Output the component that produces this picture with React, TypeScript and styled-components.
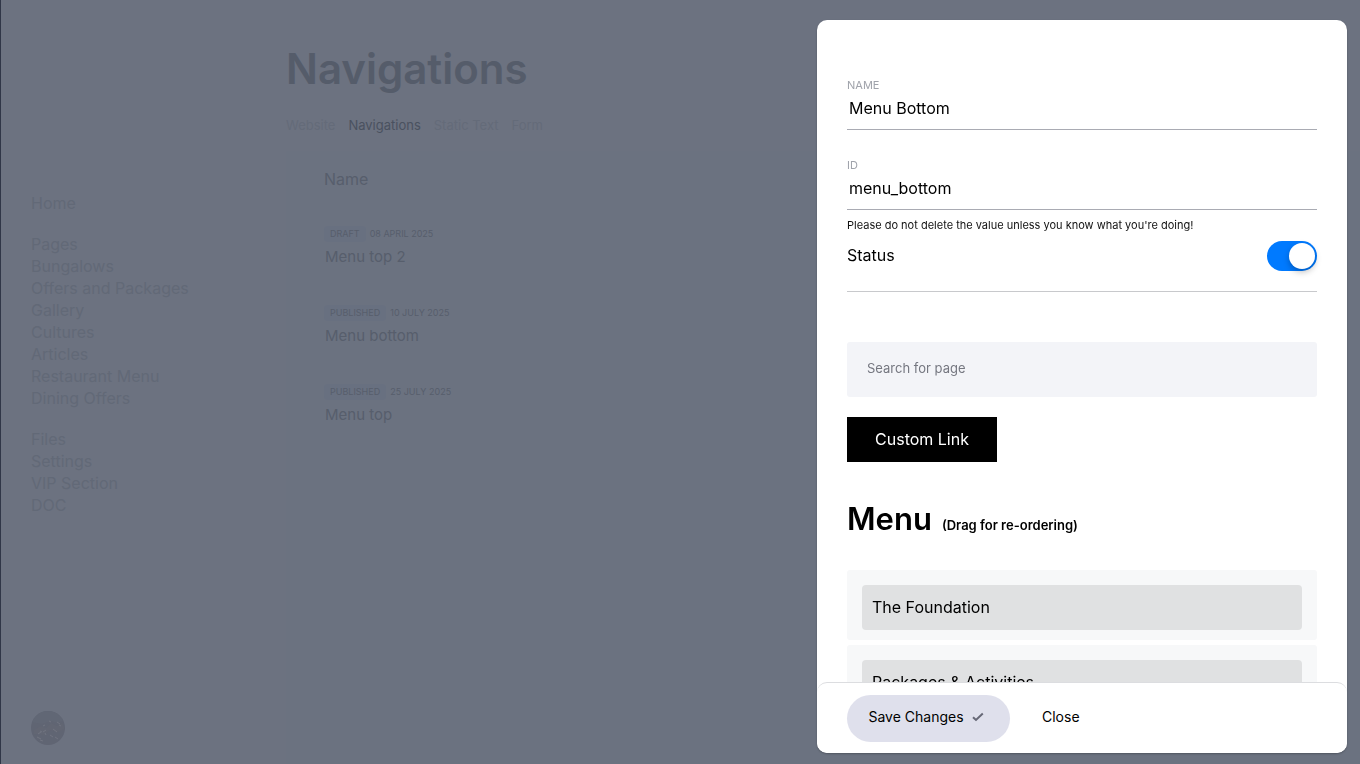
import React, { useState } from "react";
import styled, { createGlobalStyle } from "styled-components";

const GlobalStyle = createGlobalStyle`
  *, *::before, *::after { box-sizing: border-box; }
  body {
    margin: 0;
    background: #6c7280;
    color: #000;
    font-family: Inter, "Liberation Sans", sans-serif;
    font-size: 16px;
  }
  button, input { font: inherit; color: inherit; }
  h1, h2, p, ul { margin: 0; padding: 0; }
  ul { list-style: none; }
`;

const Page = styled.div`
  display: flex;
  min-height: 100vh;
  border-left: 1px solid #303647;
`;

const Sidebar = styled.aside`
  display: flex;
  flex-direction: column;
  flex: 0 0 285px;
  padding: 192px 30px 19px;
`;

const SideNav = styled.nav`
  display: flex;
  flex-direction: column;
  gap: 19px;
  flex: 1;
`;

const SideLink = styled.a`
  display: block;
  line-height: 22px;
  color: #626977;
  text-decoration: none;
`;

const Avatar = styled.svg`
  display: block;
  width: 34px;
  height: 34px;
  border-radius: 50%;
`;

const Main = styled.main`
  display: flex;
  flex-direction: column;
  flex: 1;
  min-width: 0;
  padding-top: 43px;
`;

const Title = styled.h1`
  font-size: 42px;
  line-height: 52px;
  font-weight: 600;
  color: #555c6a;
`;

const Tabs = styled.nav`
  display: flex;
  gap: 13px;
  margin-top: 22px;
  font-size: 13px;
  line-height: 16px;
`;

const Tab = styled.a<{ $active?: boolean }>`
  color: ${(p) => (p.$active ? "#4a515f" : "#646b79")};
  text-decoration: none;
`;

const Card = styled.section`
  flex: 1;
  margin-top: 18px;
  padding: 16px 38px;
  background: #6b7280;
`;

const Table = styled.table`
  width: 100%;
  border-collapse: collapse;
  text-align: left;
  color: #575e6c;

  th {
    padding: 0 0 35px;
    font-weight: 400;
    line-height: 24px;
  }
  td {
    height: 79px;
    padding: 0;
    vertical-align: top;
  }
`;

const Meta = styled.div`
  display: flex;
  align-items: center;
  gap: 4px;
  font-size: 9px;
  line-height: 16px;
  text-transform: uppercase;
`;

const Badge = styled.span`
  padding: 0 6px;
  border-radius: 4px;
  background: #687080;
`;

const RowTitle = styled.a`
  display: block;
  margin-top: 5px;
  padding-left: 1px;
  font-size: 15px;
  line-height: 20px;
  color: inherit;
  text-decoration: none;
`;

const Overlay = styled.div`
  position: fixed;
  inset: 0;
  display: flex;
  justify-content: flex-end;
  padding: 20px 13px 11px;
`;

const Drawer = styled.form`
  display: flex;
  flex-direction: column;
  width: 530px;
  max-width: 100%;
  border-radius: 10px;
  background: #fff;
  overflow: hidden;
  box-shadow: 0 1px 2px rgba(0, 0, 0, 0.25);
`;

const DrawerBody = styled.div`
  flex: 1;
  min-height: 0;
  margin-bottom: -10px;
  padding: 58px 30px 30px;
  overflow-y: auto;
  scrollbar-width: none;
`;

const Field = styled.div`
  display: flex;
  flex-direction: column;

  & + & { margin-top: 28px; }
`;

const FieldLabel = styled.label`
  font-size: 11px;
  line-height: 14px;
  color: #a0a3ab;
  text-transform: uppercase;
`;

const TextInput = styled.input`
  height: 38px;
  padding: 0 2px 6px;
  border: 0;
  border-bottom: 1px solid #a9abb3;
  background: transparent;
  outline: none;
`;

const Help = styled.p`
  margin-top: 7px;
  font-size: 11px;
  line-height: 16px;
  color: #111;
`;

const StatusRow = styled.label`
  display: flex;
  align-items: center;
  justify-content: space-between;
  padding: 8px 0 20px;
  border-bottom: 1px solid #c8c9cc;
  line-height: 20px;

  span { padding-bottom: 2px; }
`;

const Switch = styled.input`
  appearance: none;
  display: flex;
  align-items: center;
  width: 50px;
  height: 30px;
  margin: 0;
  padding: 2px;
  border-radius: 15px;
  background: #ccc;

  &::before {
    content: "";
    width: 26px;
    height: 26px;
    border-radius: 50%;
    background: #fff;
    box-shadow: 0 3px 6px rgba(0, 0, 0, 0.25);
  }
  &:checked {
    justify-content: flex-end;
    background: #007aff;
  }
`;

const Search = styled.input`
  display: block;
  width: 100%;
  height: 55px;
  margin-top: 50px;
  padding: 0 20px 3px;
  border: 0;
  border-radius: 3px;
  background: #f3f4f8;
  font-size: 13px;
  outline: none;

  &::placeholder { color: #757780; opacity: 1; }
`;

const CustomLink = styled.button`
  display: block;
  width: 150px;
  height: 45px;
  margin-top: 20px;
  padding: 0 0 2px;
  border: 0;
  background: #000;
  color: #fff;
`;

const MenuHeading = styled.h2`
  display: flex;
  align-items: baseline;
  gap: 10px;
  margin: 37px 0 31px;
  font-size: 31px;
  line-height: 40px;
  font-weight: 600;

  small {
    font-size: 13px;
    line-height: 20px;
  }
`;

const MenuList = styled.ul`
  display: flex;
  flex-direction: column;
  gap: 5px;
`;

const MenuItem = styled.li`
  padding: 15px 15px 10px;
  border-radius: 3px;
  background: #f7f8f9;
`;

const MenuHandle = styled.div`
  padding: 0 10px;
  border-radius: 4px;
  background: #e0e1e2;
  line-height: 45px;
  cursor: grab;
`;

const DrawerFooter = styled.footer`
  position: relative;
  display: flex;
  align-items: center;
  gap: 32px;
  padding: 12px 30px 11px;
  border-top: 1px solid #dcdde0;
  border-radius: 10px;
  background: #fff;
  font-size: 14px;
`;

const SaveButton = styled.button`
  display: flex;
  align-items: center;
  justify-content: center;
  gap: 8px;
  width: 163px;
  height: 47px;
  padding: 0 5px 4px 0;
  border: 0;
  border-radius: 24px;
  background: #dfe0ec;
`;

const CloseButton = styled.button`
  padding: 0 0 4px;
  border: 0;
  background: transparent;
`;

const sideGroups = [
  ["Home"],
  ["Pages", "Bungalows", "Offers and Packages", "Gallery", "Cultures", "Articles", "Restaurant Menu", "Dining Offers"],
  ["Files", "Settings", "VIP Section", "DOC"],
];

const tabs = ["Website", "Navigations", "Static Text", "Form"];

const navigations = [
  { status: "Draft", date: "08 April 2025", title: "Menu top 2" },
  { status: "Published", date: "10 July 2025", title: "Menu bottom" },
  { status: "Published", date: "25 July 2025", title: "Menu top" },
];

const menuItems = ["The Foundation", "Packages & Activities"];

export default function App() {
  const [name, setName] = useState("Menu Bottom");
  const [id, setId] = useState("menu_bottom");
  const [active, setActive] = useState(true);

  return (
    <>
      <GlobalStyle />
      <Page>
        <Sidebar>
          <SideNav aria-label="Sections">
            {sideGroups.map((group) => (
              <ul key={group[0]}>
                {group.map((item) => (
                  <li key={item}>
                    <SideLink href="#">{item}</SideLink>
                  </li>
                ))}
              </ul>
            ))}
          </SideNav>
          <Avatar viewBox="0 0 34 34" aria-hidden="true">
            <rect width="34" height="34" fill="#606573" />
            <path d="M0 0h34v9l-8 3-6-2-9 3-11-2z" fill="#616775" />
            <path d="M3 19l7-4 5 2 5-5 6 3 5-3 3 6-8 3-7-2-6 5-10-1z" fill="#626673" />
            <path
              d="M18 10l2 1M26 11l3 2M28 14l2 1M12 15l2-1M9 20l2 1M7 23l3-2M12 21l3-2M14 22l1 2M22 18l4 3M6 26l4 2M9 29l3 1M19 24l3 2M24 26l3 2"
              stroke="#707480"
              strokeWidth="1"
            />
          </Avatar>
        </Sidebar>

        <Main>
          <Title>Navigations</Title>
          <Tabs aria-label="Settings">
            {tabs.map((tab) => (
              <Tab key={tab} href="#" $active={tab === "Navigations"}>
                {tab}
              </Tab>
            ))}
          </Tabs>
          <Card>
            <Table>
              <thead>
                <tr>
                  <th scope="col">Name</th>
                </tr>
              </thead>
              <tbody>
                {navigations.map((row) => (
                  <tr key={row.title}>
                    <td>
                      <Meta>
                        <Badge>{row.status}</Badge>
                        <span>{row.date}</span>
                      </Meta>
                      <RowTitle href="#">{row.title}</RowTitle>
                    </td>
                  </tr>
                ))}
              </tbody>
            </Table>
          </Card>
        </Main>
      </Page>

      <Overlay>
        <Drawer onSubmit={(e) => e.preventDefault()}>
          <DrawerBody>
            <Field>
              <FieldLabel htmlFor="name">Name</FieldLabel>
              <TextInput id="name" value={name} onChange={(e) => setName(e.target.value)} />
            </Field>
            <Field>
              <FieldLabel htmlFor="identifier">ID</FieldLabel>
              <TextInput id="identifier" value={id} onChange={(e) => setId(e.target.value)} />
              <Help>Please do not delete the value unless you know what you're doing!</Help>
            </Field>
            <StatusRow>
              <span>Status</span>
              <Switch type="checkbox" role="switch" checked={active} onChange={(e) => setActive(e.target.checked)} />
            </StatusRow>
            <Search type="text" placeholder="Search for page" aria-label="Search for page" />
            <CustomLink type="button">Custom Link</CustomLink>
            <MenuHeading>
              Menu <small>(Drag for re-ordering)</small>
            </MenuHeading>
            <MenuList>
              {menuItems.map((item) => (
                <MenuItem key={item}>
                  <MenuHandle>{item}</MenuHandle>
                </MenuItem>
              ))}
            </MenuList>
          </DrawerBody>
          <DrawerFooter>
            <SaveButton type="submit">
              Save Changes
              <svg width="12" height="10" viewBox="0 0 12 10" fill="none" aria-hidden="true">
                <path d="M1 5.2L4 8L10.8 1.6" stroke="#666876" strokeWidth="2" />
              </svg>
            </SaveButton>
            <CloseButton type="button">Close</CloseButton>
          </DrawerFooter>
        </Drawer>
      </Overlay>
    </>
  );
}
